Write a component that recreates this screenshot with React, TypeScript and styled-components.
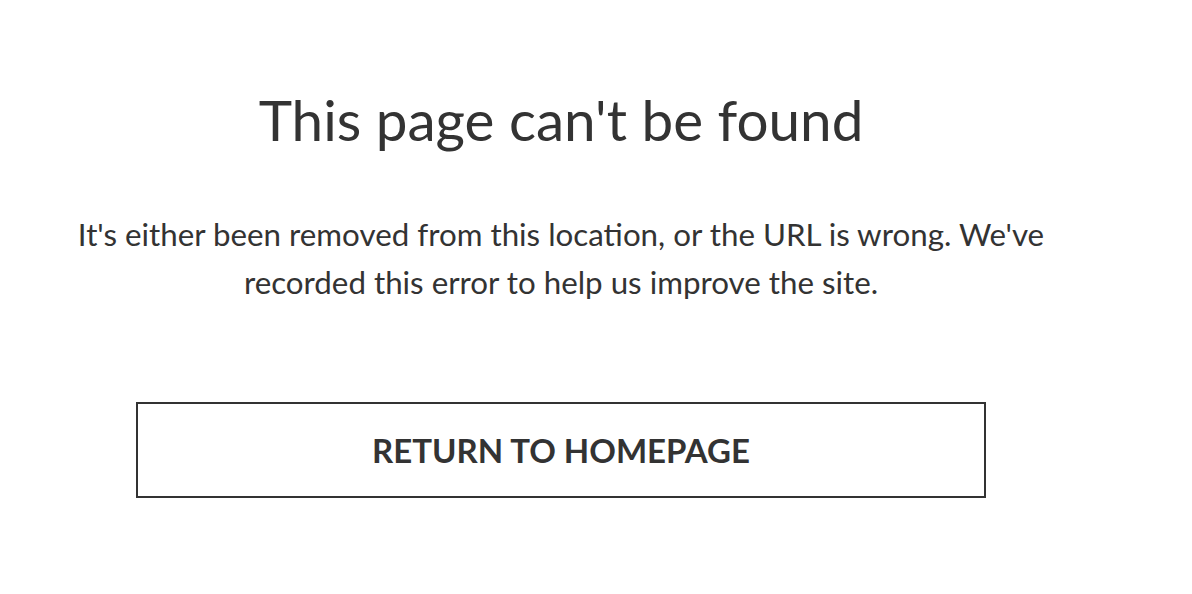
import styled, { createGlobalStyle } from "styled-components";

const GlobalStyle = createGlobalStyle`
  html, body {
    margin: 0;
    padding: 0;
    background: #fff;
  }
  body {
    font-family: "Lato", "Noto Sans", sans-serif;
    color: #333;
  }
`;

const StyledNotFound = styled.main`
  width: 1122px;
  display: flex;
  flex-direction: column;
  align-items: center;
  padding-top: 81px;
  text-align: center;
`;

const Title = styled.h1`
  margin: 0;
  font-size: 56.6px;
  font-weight: 400;
  line-height: 76px;
`;

const Message = styled.p`
  margin: 53px 0 0;
  max-width: 1000px;
  font-size: 31.3px;
  line-height: 48px;
  font-weight: 400;
`;

const HomeButton = styled.a`
  box-sizing: border-box;
  margin-top: 96px;
  width: 850px;
  height: 96px;
  display: flex;
  align-items: center;
  justify-content: center;
  border: 2px solid #333;
  color: #333;
  font-size: 33px;
  font-weight: 700;
  text-decoration: none;
  text-transform: uppercase;
`;

const NotFound = () => {
  return (
    <StyledNotFound>
      <Title>This page can't be found</Title>
      <Message>
        It's either been removed from this location, or the URL is wrong. We've
        recorded this error to help us improve the site.
      </Message>
      <HomeButton href="#">Return to homepage</HomeButton>
    </StyledNotFound>
  );
};

export default function App() {
  return (
    <>
      <GlobalStyle />
      <NotFound />
    </>
  );
}
